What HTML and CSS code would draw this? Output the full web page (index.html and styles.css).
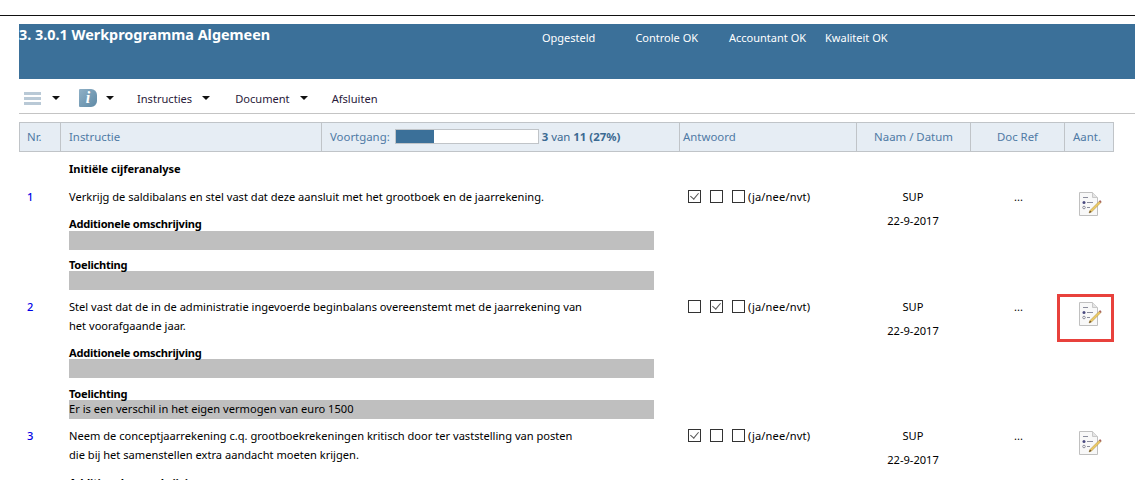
FILE: index.html
```html
<!DOCTYPE html>
<html lang="en">
<head>
    <meta charset="UTF-8">
    <title>Werkprogramma Algemeen</title>
    <link rel="stylesheet" href="styles.css">
</head>
<body>
    <svg class="defs" width="0" height="0">
        <symbol id="note" viewBox="0 0 24 24">
            <path d="M.5.5h13l5 5v18H.5z" fill="#f8f8f8" stroke="#c0c0c0"/>
            <path d="M13.500.5v5h5" fill="#e4e4e4" stroke="#c8c8c8"/>
            <path d="M4 5.500h5M8 10.500h6M8 15.500h3" stroke="#8a8c9c" fill="none"/>
            <circle cx="5" cy="10.500" r="1.500" fill="#4a4a80"/>
            <circle cx="5" cy="15.500" r="1.300" fill="none" stroke="#77798a" stroke-width=".8"/>
            <path d="M10 21l1-2.500 9.500-9.500 1.500 1.500-9.500 9.500z" fill="#eecb62" stroke="#a5853a" stroke-width=".5"/>
            <path d="M20 9.500l1-1.500 1.500 1.500-1 1.500z" fill="#a8655e"/>
            <path d="M10 21l1-2.500 1.500 1.500z" fill="#6a5030"/>
        </symbol>
    </svg>

    <div class="page">
        <header class="banner">
            <h1 class="banner-title">3. 3.0.1 Werkprogramma Algemeen</h1>
            <span class="status status-a">Opgesteld</span>
            <span class="status status-b">Controle OK</span>
            <span class="status status-c">Accountant OK</span>
            <span class="status">Kwaliteit OK</span>
        </header>

        <nav class="toolbar">
            <span class="burger"><i></i><i></i><i></i></span>
            <span class="caret caret-burger"></span>
            <span class="info">i</span>
            <span class="caret caret-info"></span>
            <span class="menu-item">Instructies</span>
            <span class="caret caret-instr"></span>
            <span class="menu-item">Document</span>
            <span class="caret caret-doc"></span>
            <span class="menu-item">Afsluiten</span>
        </nav>

        <div class="head grid">
            <div class="head-cell">Nr.</div>
            <div class="head-cell">Instructie</div>
            <div class="head-cell progress-cell">
                <span>Voortgang:</span>
                <span class="bar"><span class="bar-fill" style="width: 27%"></span></span>
                <span class="progress-text"><b>3</b> van <b>11</b> <b>(27%)</b></span>
            </div>
            <div class="head-cell answer-head">Antwoord</div>
            <div class="head-cell center">Naam / Datum</div>
            <div class="head-cell center">Doc Ref</div>
            <div class="head-cell center aant">Aant.</div>
        </div>

        <div class="section">Initiële cijferanalyse</div>

        <div class="row grid">
            <div class="nr">1</div>
            <div class="instr">
                <p class="instr-text">Verkrijg de saldibalans en stel vast dat deze aansluit met het grootboek en de jaarrekening.</p>
                <div class="label label-first">Additionele omschrijving</div>
                <div class="field"></div>
                <div class="label label-next">Toelichting</div>
                <div class="field"></div>
            </div>
            <div class="answer">
                <span class="check on"></span><span class="check"></span><span class="check"></span><span>(ja/nee/nvt)</span>
            </div>
            <div class="who">SUP<br><span class="date">22-9-2017</span></div>
            <div class="ref">...</div>
            <div class="note"><svg class="note-icon"><use href="#note"/></svg></div>
        </div>

        <div class="row row-two grid">
            <div class="nr">2</div>
            <div class="instr">
                <p class="instr-text">Stel vast dat de in de administratie ingevoerde beginbalans overeenstemt met de jaarrekening van<br>het voorafgaande jaar.</p>
                <div class="label">Additionele omschrijving</div>
                <div class="field"></div>
                <div class="label label-next">Toelichting</div>
                <div class="field">Er is een verschil in het eigen vermogen van euro 1500</div>
            </div>
            <div class="answer">
                <span class="check"></span><span class="check on"></span><span class="check"></span><span>(ja/nee/nvt)</span>
            </div>
            <div class="who">SUP<br><span class="date">22-9-2017</span></div>
            <div class="ref">...</div>
            <div class="note"><svg class="note-icon"><use href="#note"/></svg><span class="highlight"></span></div>
        </div>

        <div class="row grid">
            <div class="nr">3</div>
            <div class="instr">
                <p class="instr-text">Neem de conceptjaarrekening c.q. grootboekrekeningen kritisch door ter vaststelling van posten<br>die bij het samenstellen extra aandacht moeten krijgen.</p>
                <div class="label">Additionele omschrijving</div>
                <div class="field"></div>
            </div>
            <div class="answer">
                <span class="check on"></span><span class="check"></span><span class="check"></span><span>(ja/nee/nvt)</span>
            </div>
            <div class="who">SUP<br><span class="date">22-9-2017</span></div>
            <div class="ref">...</div>
            <div class="note"><svg class="note-icon"><use href="#note"/></svg></div>
        </div>
    </div>
</body>
</html>
```

FILE: styles.css
```css
html, body {
    margin: 0;
    padding: 0;
    height: 480px;
    overflow: hidden;
    background: #fff;
}
body {
    font-family: "Noto Sans", "Open Sans", sans-serif;
    font-size: 11.1px;
    color: #000;
}
.defs {
    display: block;
    height: 0;
}
.page {
    margin-top: 15px;
    border-top: 1px solid #111;
    padding: 8px 0 0 19px;
    height: 456px;
    overflow: hidden;
}

/* blue banner */
.banner {
    display: flex;
    height: 55px;
    background: #3b7099;
    color: #fff;
    font-size: 11px;
}
.banner-title {
    margin: 0;
    width: 523px;
    font-size: 14.4px;
    line-height: 21px;
    font-weight: 700;
}
.status {
    margin-top: 5px;
    line-height: 18px;
}
.status-a { margin-right: 40px; }
.status-b { margin-right: 31px; }
.status-c { margin-right: 19px; }

/* toolbar */
.toolbar {
    display: flex;
    align-items: center;
    box-sizing: border-box;
    height: 35px;
    padding-top: 4px;
    border-bottom: 1px solid #c4c4c4;
    color: #2a1a3a;
    font-size: 11.1px;
}
.burger {
    display: flex;
    flex-direction: column;
    gap: 2px;
    margin-left: 5px;
    width: 17px;
}
.burger i {
    display: block;
    height: 3px;
    background: #b9c9d6;
}
.caret {
    width: 0;
    height: 0;
    border-left: 4px solid transparent;
    border-right: 4px solid transparent;
    border-top: 4px solid #111;
}
.caret-burger { margin: 0 19px 0 11px; }
.caret-info { margin: 0 23px 0 9px; }
.caret-instr { margin: 0 25px 0 10px; }
.caret-doc { margin: 0 24px 0 10px; }
.info {
    width: 18px;
    height: 18px;
    background: linear-gradient(135deg, #8fb0c6, #5f8aa6);
    border-radius: 1px 6px 6px 1px;
    color: #fff;
    font: italic 700 16px/18px "Liberation Serif", serif;
    text-align: center;
}

/* table */
.grid {
    display: grid;
    grid-template-columns: 41px 261px 358px 177px 114px 94px 50px;
    width: 1095px;
}
.head {
    grid-template-columns: 40px 261px 358px 177px 114px 94px 49px;
    margin-top: 8px;
    height: 30px;
    box-sizing: border-box;
    background: #e6edf4;
    border: 1px solid #c0c4c8;
    color: #4f7aa5;
    font-size: 11.4px;
}
.head-cell {
    display: flex;
    align-items: center;
    padding: 0 0 1px 8px;
    border-left: 1px solid #c0c4c8;
}
.head-cell:first-child {
    border-left: 0;
    padding-left: 7px;
}
.center {
    justify-content: center;
    padding-left: 0;
}
.answer-head {
    padding-left: 3px;
}
.aant {
    padding-right: 4px;
}
.bar {
    display: block;
    box-sizing: border-box;
    width: 144px;
    height: 15px;
    margin: 0 3px 0 5px;
    background: #fff;
    border: 1px solid #c0c4c8;
}
.bar-fill {
    display: block;
    height: 100%;
    background: #3b7099;
}
.progress-text {
    color: #3b6a92;
}

.section {
    margin: 8px 0 0 50px;
    font-weight: 700;
    line-height: 18px;
    letter-spacing: -.05px;
}
.row {
    padding-bottom: 7px;
    line-height: 19px;
}
.section + .row {
    padding-top: 9px;
}
.nr {
    padding-left: 8px;
    color: #0000e6;
    font-weight: 500;
}
.instr {
    grid-column: 2 / 4;
    padding-left: 9px;
}
.instr-text {
    margin: 0;
}
.label {
    margin-top: 12px;
    font-weight: 700;
    line-height: 13px;
    letter-spacing: -.25px;
}
.label-first {
    margin-top: 11px;
    padding-bottom: 1px;
}
.label-next {
    margin-top: 8px;
}
.row-two .instr-text {
    margin-bottom: -1px;
}
.row-two .label-next {
    margin-top: 9px;
}
.field {
    width: 585px;
    height: 19px;
    background: #bfbfbf;
    line-height: 17px;
}
.answer {
    display: flex;
    align-items: flex-start;
    height: 19px;
    padding-left: 9px;
    letter-spacing: .15px;
}
.check {
    position: relative;
    box-sizing: border-box;
    flex: none;
    width: 13px;
    height: 13px;
    margin: 3px 9px 0 0;
    border: 1px solid #333;
}
.check:nth-child(3) {
    margin-right: 3px;
}
.check.on::after {
    content: "";
    position: absolute;
    left: 3px;
    top: 0;
    width: 4px;
    height: 7px;
    border-right: 1.500px solid #555;
    border-bottom: 1.500px solid #555;
    transform: rotate(40deg);
}
.who {
    text-align: center;
}
.date {
    display: block;
    margin-top: 5px;
}
.ref {
    padding-left: 3px;
    text-align: center;
}
.note {
    position: relative;
    text-align: center;
}
.note-icon {
    display: block;
    width: 24px;
    height: 24px;
    margin: 5px 0 0 15px;
}
.highlight {
    position: absolute;
    left: -7px;
    top: -3px;
    width: 57px;
    height: 48px;
    box-sizing: border-box;
    border: 3px solid #e8413c;
}
```
